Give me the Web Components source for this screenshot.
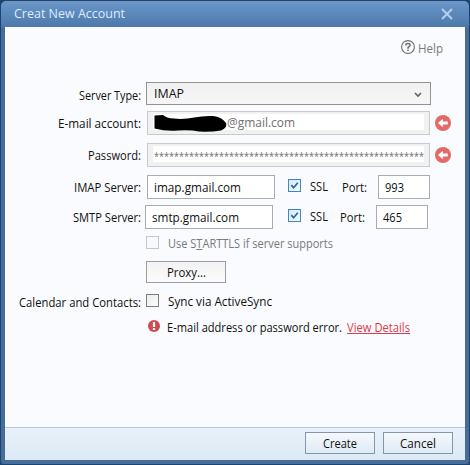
<!DOCTYPE html>
<html lang="en">
<head>
<meta charset="utf-8">
<title>Creat New Account</title>
<style>
    html, body {
        margin: 0;
        width: 470px;
        height: 465px;
        overflow: hidden;
        background: #1b4470;
        font-family: "Open Sans", "Noto Sans", sans-serif;
        font-size: 12.5px;
        color: #111;
    }
</style>
</head>
<body>
<account-dialog></account-dialog>

<script>
// One line of text, condensed or tracked so that it fills exactly `w` pixels
class FitText extends HTMLElement {
    connectedCallback() {
        this.attachShadow({ mode: 'open' }).innerHTML = `
            <style>
                :host { display: inline-block; white-space: nowrap; line-height: 16px; flex: none; }
                span { display: inline-block; transform-origin: 0 0; }
                :host([underline]) span { text-decoration: underline; }
            </style>
            <span><slot></slot></span>
        `;
        const width = parseFloat(this.getAttribute('w'));
        const span = this.shadowRoot.querySelector('span');
        const natural = span.getBoundingClientRect().width;
        this.style.width = width + 'px';
        if (width < natural) {
            span.style.transform = `scaleX(${width / natural})`;
        } else {
            span.style.letterSpacing = (width - natural) / this.textContent.length + 'px';
        }
    }
}

// Label at the left, controls at the right
class FormRow extends HTMLElement {
    connectedCallback() {
        this.attachShadow({ mode: 'open' }).innerHTML = `
            <style>
                :host { display: grid; grid-template-columns: 136px 1fr; }
                .label { display: flex; justify-content: flex-end; padding-top: var(--label-top, 5px); }
                .controls { display: flex; align-items: flex-start; padding-left: var(--indent, 6px); }
            </style>
            <div class="label"><slot name="label"></slot></div>
            <div class="controls"><slot></slot></div>
        `;
    }
}

class TextField extends HTMLElement {
    connectedCallback() {
        this.attachShadow({ mode: 'open' }).innerHTML = `
            <style>
                :host {
                    display: block;
                    box-sizing: border-box;
                    flex: none;
                    height: 24px;
                    border: 1px solid #a9acb2;
                    background: #fff;
                    padding: 3px 0 0 6px;
                }
                :host([disabled]) {
                    border-color: #c9cacd;
                    background: #f1f1f2;
                    color: #707070;
                    padding: 2px 5px 4px 5px;
                }
                :host([disabled]) div {
                    display: flex;
                    align-items: flex-start;
                    height: 16px;
                    background: #fff;
                    padding-left: 1px;
                }
            </style>
            <div><slot></slot></div>
        `;
    }
}

class SelectBox extends HTMLElement {
    connectedCallback() {
        this.attachShadow({ mode: 'open' }).innerHTML = `
            <style>
                :host {
                    display: flex;
                    box-sizing: border-box;
                    width: 285px;
                    height: 23px;
                    border: 1px solid #939393;
                    background: linear-gradient(#f1f1f1, #f6f6f6);
                    justify-content: space-between;
                    padding: 3px 8px 0 7px;
                }
                svg { margin-top: 6px; }
            </style>
            <slot></slot>
            <svg width="8" height="6" viewBox="0 0 8 6"><path d="M1 1l3 3 3-3" fill="none" stroke="#606060" stroke-width="1.6"/></svg>
        `;
    }
}

class CheckBox extends HTMLElement {
    connectedCallback() {
        const tick = this.hasAttribute('checked')
            ? '<svg width="11" height="11" viewBox="0 0 11 11"><path d="M2.3 5.2l2.3 2.5 4.2-5" fill="none" stroke="#2b659b" stroke-width="1.7"/></svg>'
            : '';
        this.attachShadow({ mode: 'open' }).innerHTML = `
            <style>
                :host {
                    display: block;
                    box-sizing: border-box;
                    flex: none;
                    width: 13px;
                    height: 13px;
                    border: 1px solid #7b7d80;
                    background: linear-gradient(135deg, #ececec, #fcfcfc);
                }
                :host([checked]) { border-color: #4687b8; background: linear-gradient(135deg, #cfeafc, #f2faff); }
                :host([disabled]) { border-color: #c6c7c9; background: #f8f9fa; }
                svg { display: block; }
            </style>
            ${tick}
        `;
    }
}

class PushButton extends HTMLElement {
    connectedCallback() {
        this.attachShadow({ mode: 'open' }).innerHTML = `
            <style>
                :host {
                    display: flex;
                    box-sizing: border-box;
                    justify-content: center;
                    width: var(--width, 70px);
                    height: 22px;
                    padding-top: 3px;
                    border: 1px solid var(--edge, #8395ad);
                    background: var(--fill, linear-gradient(#f4f9fd, #dfebf5));
                }
            </style>
            <slot></slot>
        `;
    }
}

class StatusIcon extends HTMLElement {
    connectedCallback() {
        const shapes = {
            arrow: '<svg width="16" height="16" viewBox="0 0 16 16"><circle cx="8" cy="8" r="8" fill="#e36a6b"/><path d="M3 8l4.8-4.2v2.7h5v3h-5v2.7z" fill="#fff"/></svg>',
            error: '<svg width="12" height="12" viewBox="0 0 12 12"><circle cx="6" cy="6" r="6" fill="#d04a4f"/><path d="M4.9 2h2.2v5H4.9zM4.9 8h2.2v2H4.9z" fill="#fff"/></svg>',
            help: '<svg width="14" height="14" viewBox="0 0 14 14" fill="none" stroke="#707276"><circle cx="7" cy="7" r="6.4" stroke-width="1.1"/><path d="M4.9 5.5V4.9q0-1.4 2.1-1.4t2.1 1.5q0 .9-1 1.5T7 8.1v.6M7 9.6V11" stroke-width="1.5"/></svg>',
            close: '<svg width="12" height="12" viewBox="0 0 12 12"><path d="M1 1l10 10M11 1L1 11" stroke="#b4cfec" stroke-width="2"/></svg>'
        };
        this.attachShadow({ mode: 'open' }).innerHTML = `
            <style>
                :host { display: block; flex: none; }
                svg { display: block; }
            </style>
            ${shapes[this.getAttribute('kind')]}
        `;
    }
}

class AccountDialog extends HTMLElement {
    connectedCallback() {
        this.attachShadow({ mode: 'open' }).innerHTML = `
            <style>
                :host { display: block; padding: 1px; height: 463px; }
                .window {
                    display: grid;
                    grid-template-rows: 26px 400px 33px;
                    box-sizing: border-box;
                    height: 463px;
                    width: 468px;
                    padding: 0 4px 4px;
                    border-radius: 5px 5px 3px 3px;
                    background: linear-gradient(#7096c4, #6390c2 6px, #4d79aa 26px, #476c99 27px, #476c99);
                }
                header { display: flex; justify-content: space-between; padding: 5px 12px 0 9px; color: #dcecfb; }
                header status-icon { margin-top: 2px; }
                main { background: #f9fbfe; }
                .help { display: flex; justify-content: flex-end; padding: 13px 22px 0 0; height: 42px; color: #797b7f; }
                .help fit-text { margin: 1px 0 0 3px; }
                form-row { height: 32px; }
                footer {
                    display: flex;
                    justify-content: flex-end;
                    gap: 8px;
                    border-top: 1px solid #b3c5d8;
                    background: linear-gradient(#e8f1f9, #dceaf4);
                    padding: 4px 12px 0 0;
                }
                form-row.imap, form-row.smtp { height: 30px; }
                form-row.smtp { --indent: 4px; }
                .imap check-box { margin: 4px 9px 0 13px; }
                .smtp check-box { margin: 4px 9px 0 15px; }
                .imap .port { margin: 5px 11px 0 14px; }
                .smtp .port { margin: 5px 11px 0 12px; }
                .ssl { margin-top: 4px; }
                .dim { color: #777a7e; }
                .wide { width: 283px; }
                .mid { width: 128px; }
                .small { width: 52px; }
                .arrow { margin: 4px 0 0 5px; }
                .redaction { flex: none; display: block; }
                .domain { margin-top: 1px; }
                .stars { margin-top: 2px; font-size: 10px; }
                .plain { --width: 80px; --edge: #9c9da0; --fill: linear-gradient(#f3f3f4, #fbfbfb); }
                .link { color: #dc3c4a; }
                .accel { text-decoration: underline; }
            </style>
            <div class="window">
                <header>
                    <fit-text w="111">Creat New Account</fit-text>
                    <status-icon kind="close"></status-icon>
                </header>
                <main>
                    <div class="help">
                        <status-icon kind="help"></status-icon>
                        <fit-text w="25">Help</fit-text>
                    </div>
                    <form-row style="height: 29px; --indent: 5px; --label-top: 6px">
                        <fit-text slot="label" w="62">Server Type:</fit-text>
                        <select-box><fit-text w="30">IMAP</fit-text></select-box>
                    </form-row>
                    <form-row>
                        <fit-text slot="label" w="83">E-mail account:</fit-text>
                        <text-field class="wide" disabled>
                            <svg class="redaction" width="73" height="19" viewBox="0 0 73 19"><path d="M.5 1.5L9 1Q12 4 20 4.6Q31 5.5 40 3.5Q50 1.5 59 2Q68 3 72 9Q73.5 14 67 16.5Q58 18 45 17.6Q36 15.5 24 16.5Q12 17.5 .5 14.5Z" fill="#000"/></svg>
                            <fit-text class="domain" w="68">@gmail.com</fit-text>
                        </text-field>
                        <status-icon class="arrow" kind="arrow"></status-icon>
                    </form-row>
                    <form-row>
                        <fit-text slot="label" w="53">Password:</fit-text>
                        <text-field class="wide" disabled>
                            <fit-text class="stars" w="270">******************************************************</fit-text>
                        </text-field>
                        <status-icon class="arrow" kind="arrow"></status-icon>
                    </form-row>
                    <form-row class="imap">
                        <fit-text slot="label" w="67">IMAP Server:</fit-text>
                        <text-field class="mid"><fit-text w="87">imap.gmail.com</fit-text></text-field>
                        <check-box checked></check-box>
                        <fit-text class="ssl" w="18">SSL</fit-text>
                        <fit-text class="port" w="25">Port:</fit-text>
                        <text-field class="small"><fit-text w="19">993</fit-text></text-field>
                    </form-row>
                    <form-row class="smtp">
                        <fit-text slot="label" w="68">SMTP Server:</fit-text>
                        <text-field class="mid"><fit-text w="87">smtp.gmail.com</fit-text></text-field>
                        <check-box checked></check-box>
                        <fit-text class="ssl" w="18">SSL</fit-text>
                        <fit-text class="port" w="25">Port:</fit-text>
                        <text-field class="small"><fit-text w="19">465</fit-text></text-field>
                    </form-row>
                    <form-row style="height: 26px; --indent: 5px">
                        <check-box disabled style="margin-top: 1px"></check-box>
                        <fit-text class="dim" w="165" style="margin: 1px 0 0 9px">Use S<span class="accel">T</span>ARTTLS if server supports</fit-text>
                    </form-row>
                    <form-row style="height: 31px; --indent: 5px">
                        <push-button class="plain"><fit-text w="39">Proxy...</fit-text></push-button>
                    </form-row>
                    <form-row style="height: 26px; --indent: 5px; --label-top: 3px">
                        <fit-text slot="label" w="122">Calendar and Contacts:</fit-text>
                        <check-box style="margin-top: 2px"></check-box>
                        <fit-text w="104" style="margin: 2px 0 0 9px">Sync via ActiveSync</fit-text>
                    </form-row>
                    <form-row style="--indent: 7px">
                        <status-icon kind="error" style="margin-top: 2px"></status-icon>
                        <fit-text w="175" style="margin: 2px 0 0 7px">E-mail address or password error.</fit-text>
                        <fit-text class="link" underline w="63" style="margin: 2px 0 0 5px">View Details</fit-text>
                    </form-row>
                </main>
                <footer>
                    <push-button><fit-text w="34">Create</fit-text></push-button>
                    <push-button><fit-text w="36">Cancel</fit-text></push-button>
                </footer>
            </div>
        `;
    }
}

customElements.define('fit-text', FitText);
customElements.define('form-row', FormRow);
customElements.define('text-field', TextField);
customElements.define('select-box', SelectBox);
customElements.define('check-box', CheckBox);
customElements.define('push-button', PushButton);
customElements.define('status-icon', StatusIcon);
customElements.define('account-dialog', AccountDialog);
</script>
</body>
</html>
